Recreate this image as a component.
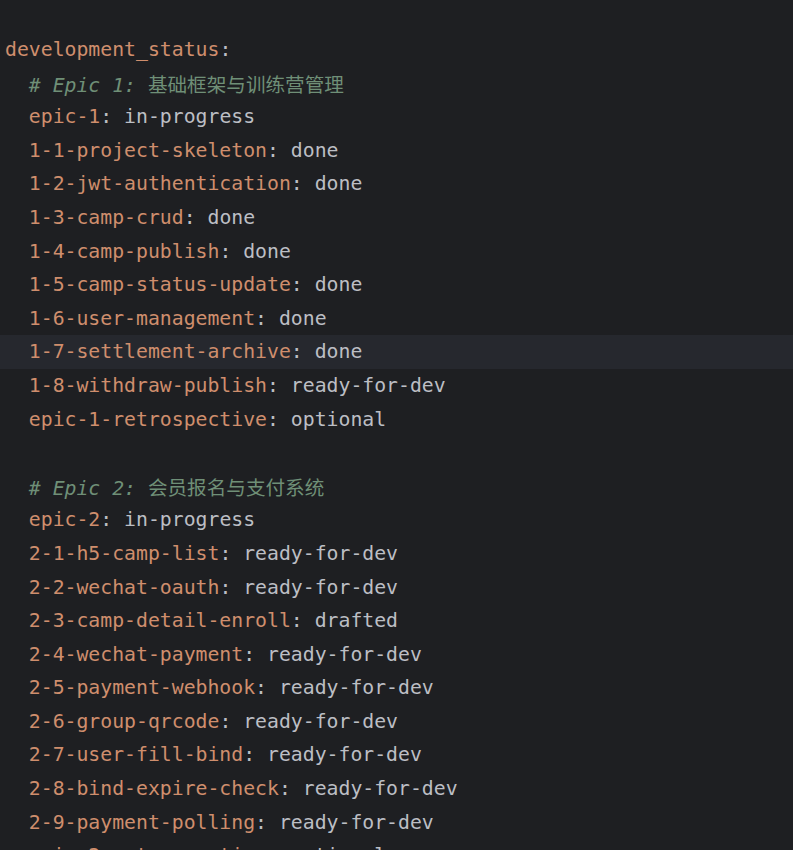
import React from "react";

const lines = [
  { k: "development_status", v: null, indent: 0 },
  { c: "# Epic 1: ", cjk: "基础框架与训练营管理" },
  { k: "epic-1", v: "in-progress" },
  { k: "1-1-project-skeleton", v: "done" },
  { k: "1-2-jwt-authentication", v: "done" },
  { k: "1-3-camp-crud", v: "done" },
  { k: "1-4-camp-publish", v: "done" },
  { k: "1-5-camp-status-update", v: "done" },
  { k: "1-6-user-management", v: "done" },
  { k: "1-7-settlement-archive", v: "done", hl: true },
  { k: "1-8-withdraw-publish", v: "ready-for-dev" },
  { k: "epic-1-retrospective", v: "optional" },
  { empty: true },
  { c: "# Epic 2: ", cjk: "会员报名与支付系统" },
  { k: "epic-2", v: "in-progress" },
  { k: "2-1-h5-camp-list", v: "ready-for-dev" },
  { k: "2-2-wechat-oauth", v: "ready-for-dev" },
  { k: "2-3-camp-detail-enroll", v: "drafted" },
  { k: "2-4-wechat-payment", v: "ready-for-dev" },
  { k: "2-5-payment-webhook", v: "ready-for-dev" },
  { k: "2-6-group-qrcode", v: "ready-for-dev" },
  { k: "2-7-user-fill-bind", v: "ready-for-dev" },
  { k: "2-8-bind-expire-check", v: "ready-for-dev" },
  { k: "2-9-payment-polling", v: "ready-for-dev" },
  { k: "epic-2-retrospective", v: "optional" },
];

export default function App() {
  return (
    <div
      className="w-[793px] h-[850px] overflow-hidden bg-[#1e1f22] pt-[33px]"
      style={{ fontFamily: '"DejaVu Sans Mono", "Noto Sans CJK SC", monospace' }}
    >
      {lines.map((l, i) => (
        <div
          key={i}
          className={`h-[33.6px] leading-[33.6px] text-[19.8px] whitespace-pre pl-[5px] ${
            l.hl ? "bg-[#26282e]" : ""
          }`}
        >
          {l.empty ? (
            " "
          ) : l.c ? (
            <span className="text-[#6f8f77]">
              <span className="italic">{"  " + l.c}</span>
              <span className="text-[19.6px]" style={{ fontFamily: '"Noto Sans CJK SC", sans-serif' }}>{l.cjk}</span>
            </span>
          ) : (
            <>
              <span className="text-[#cf8e6d]">{(l.indent === 0 ? "" : "  ") + l.k}</span>
              <span className="text-[#bcbec4]">:</span>
              {l.v && <span className="text-[#bcbec4]">{" " + l.v}</span>}
            </>
          )}
        </div>
      ))}
    </div>
  );
}
